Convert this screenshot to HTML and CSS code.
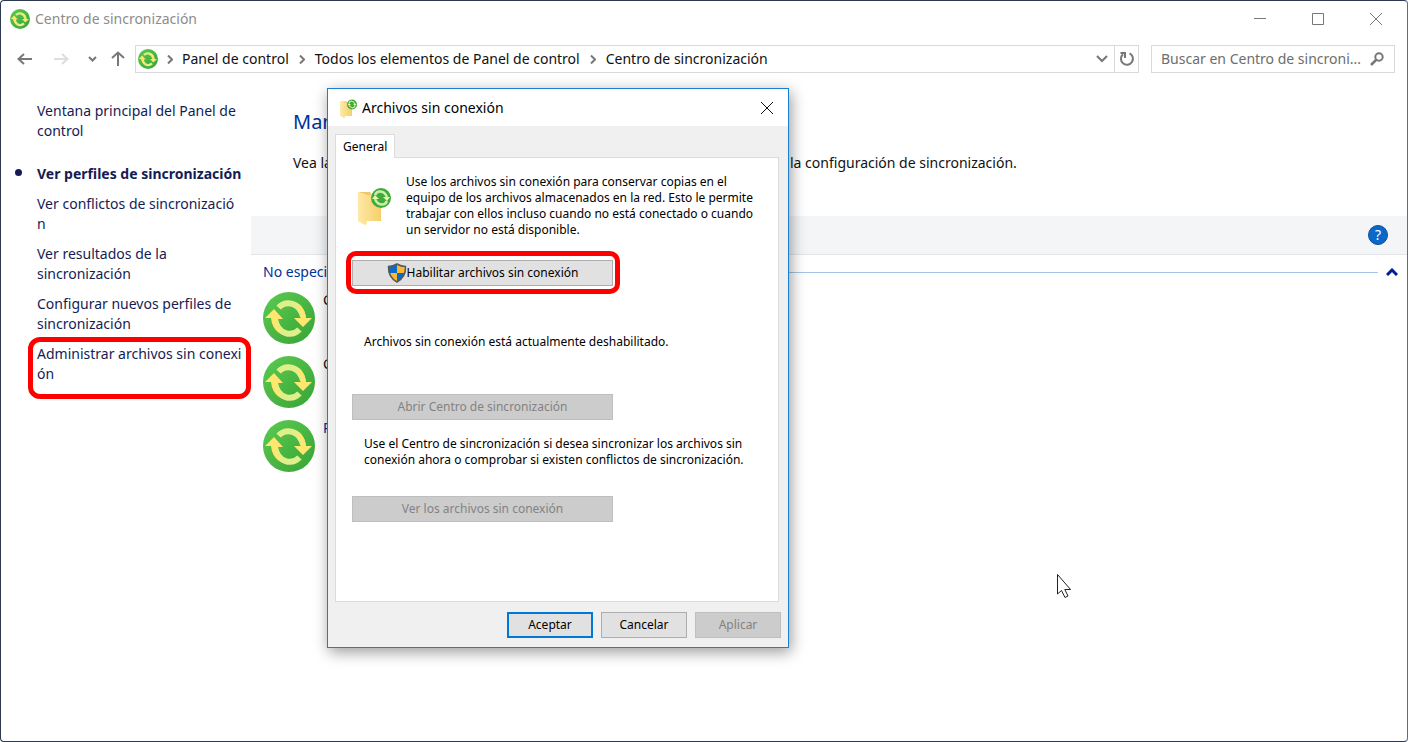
FILE: index.html
```html
<!DOCTYPE html>
<html lang="es">
<head>
<meta charset="utf-8">
<title>Centro de sincronización</title>
<link rel="stylesheet" href="styles.css">
</head>
<body>
<svg class="defs" aria-hidden="true">
  <defs>
    <linearGradient id="green" x1="0" y1="0" x2="1" y2="1">
      <stop offset="0" stop-color="#5ccb50"/><stop offset="1" stop-color="#37a336"/>
    </linearGradient>
    <linearGradient id="fold" x1="0" y1="0" x2="1" y2="0">
      <stop offset="0" stop-color="#ffe9a8"/><stop offset="1" stop-color="#f5cf6a"/>
    </linearGradient>
    <symbol id="sync" viewBox="0 0 52 52">
      <circle cx="26" cy="26" r="26" fill="url(#green)"/>
      <path d="M15.500 15.500C23 8 37 10 40 25" fill="none" stroke="#dff08a" stroke-width="6"/>
      <path d="M36.500 37.500C29 45 15 43 12 27" fill="none" stroke="#dff08a" stroke-width="6"/>
      <path d="M34 14Q38 19 38 26H31L40 35L49 26H43Q42 17 36 12z" fill="#ffe66e"/>
      <path d="M18 39Q14 34 14 27H20L11 17L2 26H8Q9 36 16 41z" fill="#ffe66e"/>
    </symbol>
    <symbol id="folder" viewBox="0 0 36 40">
      <path d="M2 7H14L16 10H25V36H2z" fill="#efc965"/>
      <path d="M2 7L11 10V40L2 36z" fill="#fff0bd"/>
      <path d="M2 7L11 10L25 9V36H11L9 40L2 36z" fill="url(#fold)"/>
      <circle cx="25" cy="13" r="10" fill="#3fab3b"/>
      <path d="M19 10C21 5 28 5 31 12M31 16C29 21 22 21 19 14" fill="none" stroke="#c9efa4" stroke-width="2.500"/>
      <path d="M27 12H34L31 16zM23 14H16L19 10z" fill="#e9f7a8"/>
    </symbol>
  </defs>
</svg>
<div class="window">
  <header class="titlebar">
    <svg class="icon20"><use href="#sync"/></svg>
    <span class="caption">Centro de sincronización</span>
    <button class="wbtn" aria-label="Minimizar"><svg width="12" height="12"><path d="M0 5.500H12"/></svg></button>
    <button class="wbtn" aria-label="Maximizar"><svg width="12" height="12"><path d="M.5.5H11.500V11.500H.5z"/></svg></button>
    <button class="wbtn" aria-label="Cerrar"><svg width="12" height="12"><path d="M0 0L12 12M12 0L0 12"/></svg></button>
  </header>
  <nav class="toolbar" aria-label="Navegación">
    <div class="history">
      <button aria-label="Atrás"><svg width="16" height="12"><path d="M7 1L1.500 6L7 11M2 6H15" stroke-width="2"/></svg></button>
      <button class="off" aria-label="Adelante"><svg width="16" height="12"><path d="M9 1L14.500 6L9 11M14 6H1" stroke-width="2"/></svg></button>
      <button aria-label="Recientes"><svg width="9" height="6"><path d="M1 1L4.500 4.500L8 1" stroke-width="2"/></svg></button>
      <button aria-label="Subir"><svg width="14" height="16"><path d="M1 7L7 1.500L13 7M7 2V15" stroke-width="2"/></svg></button>
    </div>
    <div class="address">
      <svg class="icon20"><use href="#sync"/></svg>
      <svg class="sep" width="6" height="9"><path d="M1 .5L5 4.500L1 8.500"/></svg>
      <a href="#">Panel de control</a>
      <svg class="sep" width="6" height="9"><path d="M1 .5L5 4.500L1 8.500"/></svg>
      <a href="#">Todos los elementos de Panel de control</a>
      <svg class="sep" width="6" height="9"><path d="M1 .5L5 4.500L1 8.500"/></svg>
      <a href="#">Centro de sincronización</a>
      <button class="drop" aria-label="Ubicaciones anteriores"><svg width="12" height="8"><path d="M1 1L6 6L11 1" stroke-width="2"/></svg></button>
      <button class="reload" aria-label="Actualizar"><svg width="16" height="16"><path d="M10.500 2.300A6 6 0 1 1 4 3.200M1.500 2H6V7" stroke-width="2"/></svg></button>
    </div>
    <div class="search">
      <input type="text" aria-label="Buscar" placeholder="Buscar en Centro de sincroni...">
      <svg width="14" height="14"><circle cx="9" cy="5" r="3.700" stroke-width="2"/><path d="M6.500 7.500L1 13" stroke-width="2.500"/></svg>
    </div>
  </nav>
  <div class="body">
    <aside class="side">
      <a class="home" href="#">Ventana principal del Panel de<br>control</a>
      <a class="current" href="#">Ver perfiles de sincronización</a>
      <a href="#">Ver conflictos de sincronizació<br>n</a>
      <a href="#">Ver resultados de la<br>sincronización</a>
      <a href="#">Configurar nuevos perfiles de<br>sincronización</a>
      <a class="marked" href="#">Administrar archivos sin conexi<br>ón</a>
    </aside>
    <main class="main">
      <h1>Man</h1>
      <p class="intro"><span>Vea la</span><span>la configuración de sincronización.</span></p>
      <div class="band"><button class="help" aria-label="Ayuda">?</button></div>
      <div class="group"><h2>No especi</h2><span class="rule"></span>
        <svg width="12" height="8"><path d="M1 7L6 2L11 7"/></svg></div>
      <ul class="items">
        <li><svg class="icon52"><use href="#sync"/></svg><span>C</span></li>
        <li><svg class="icon52"><use href="#sync"/></svg><span>C</span></li>
        <li><svg class="icon52"><use href="#sync"/></svg><span class="strong">P</span></li>
      </ul>
    </main>
  </div>
</div>

<section class="dialog" role="dialog" aria-labelledby="dlg-title">
  <header class="dlg-head">
    <svg class="mini"><use href="#folder"/></svg>
    <h2 id="dlg-title">Archivos sin conexión</h2>
    <button aria-label="Cerrar"><svg width="12" height="12"><path d="M0 0L12 12M12 0L0 12"/></svg></button>
  </header>
  <div class="dlg-body">
    <button class="tab" role="tab" aria-selected="true">General</button>
    <div class="panel" role="tabpanel">
      <div class="about">
        <svg class="big"><use href="#folder"/></svg>
        <p>Use los archivos sin conexión para conservar copias en el<br>equipo de los archivos almacenados en la red. Esto le permite<br>trabajar con ellos incluso cuando no está conectado o cuando<br>un servidor no está disponible.</p>
      </div>
      <button class="btn wide marked">
        <svg width="20" height="20" viewBox="0 0 20 20"><path d="M10 1Q14 3.500 18.500 3.500Q19 14 10 19Q1 14 1.500 3.500Q6 3.500 10 1z" fill="#0c6ac9"/><path d="M10 1Q14 3.500 18.500 3.500Q18.700 7 17.700 10H10zM10 10V19Q4.500 16 2.300 10z" fill="#fdb92e"/><path d="M10 1Q14 3.500 18.500 3.500Q19 14 10 19Q1 14 1.500 3.500Q6 3.500 10 1z" fill="none" stroke="#55585c" stroke-width="1.500"/></svg>Habilitar archivos sin conexión</button>
      <p class="status">Archivos sin conexión está actualmente deshabilitado.</p>
      <button class="btn wide" disabled>Abrir Centro de sincronización</button>
      <p class="hint">Use el Centro de sincronización si desea sincronizar los archivos sin<br>conexión ahora o comprobar si existen conflictos de sincronización.</p>
      <button class="btn wide" disabled>Ver los archivos sin conexión</button>
    </div>
    <footer class="actions">
      <button class="btn primary">Aceptar</button>
      <button class="btn">Cancelar</button>
      <button class="btn" disabled>Aplicar</button>
    </footer>
  </div>
</section>
<svg class="pointer" width="16" height="26" viewBox="0 0 16 26"><path d="M1.500 1.500V21L5.500 17.500L9 24.500L12 23L8.800 16.500H14.500z"/></svg>
</body>
</html>
```
FILE: styles.css
```css
* { box-sizing: border-box; }
body {
  margin: 0;
  font: 14px/20px "Noto Sans", "Open Sans", sans-serif;
  color: #111;
  background: #fff;
}
h1, h2, p, ul { margin: 0; padding: 0; font-weight: 400; }
a { color: inherit; text-decoration: none; }
button { font: inherit; border: 0; background: none; padding: 0; color: inherit; }
svg { flex: none; fill: none; }
.defs { position: absolute; width: 0; height: 0; }
.icon20 { width: 20px; height: 20px; }
.icon52 { width: 52px; height: 52px; }

.window {
  min-height: 100vh;
  border: 1px solid #2e3950;
  border-right-color: #4c7390;
  border-radius: 4px;
}
.titlebar { display: flex; align-items: center; height: 36px; padding: 0 2px 0 9px; }
.caption { flex: 1; margin-left: 5px; color: #8c8c8c; }
.wbtn { width: 58px; height: 30px; display: grid; place-items: center; }
.wbtn svg { stroke: #777; }

.toolbar { display: flex; align-items: center; height: 44px; padding-right: 12px; }
.history { display: flex; align-items: center; width: 125px; margin-right: 9px; padding-left: 16px; }
.history button { display: flex; }
.history button + button { margin-left: 20px; }
.history .off + button { margin-left: 19px; }
.history button:last-child { margin-left: 14px; }
.history svg { stroke: #777; }
.history .off svg { stroke: #ddd; }
.address { flex: 1; display: flex; align-items: center; height: 28px; border: 1px solid #d9d9d9; padding-left: 2px; }
.address a { white-space: nowrap; }
.sep { margin: 0 10px; stroke: #777; stroke-width: 2; }
.icon20 + .sep { margin: 0 9px; }
.drop { margin-left: auto; width: 24px; height: 26px; display: grid; place-items: center; }
.reload { width: 24px; height: 26px; border-left: 1px solid #d9d9d9; display: grid; place-items: center; }
.drop svg, .reload svg, .search svg { stroke: #777; }
.search { display: flex; align-items: center; width: 244px; height: 28px; margin-left: 12px; border: 1px solid #d9d9d9; padding: 0 10px 0 9px; }
.search input { flex: 1; min-width: 0; border: 0; padding: 0; font: inherit; outline: 0; background: none; }
.search input::placeholder { color: #6d6d6d; opacity: 1; }

.body { display: flex; padding-top: 20px; }
.side { display: flex; flex-direction: column; gap: 10px; width: 250px; padding-left: 36px; color: #151c55; white-space: nowrap; }
.home { margin-bottom: 13px; }
.current { position: relative; font-weight: 700; }
.current::before { content: ""; position: absolute; left: -22px; top: 5px; width: 7px; height: 7px; border-radius: 50%; background: #151c55; }
.marked { position: relative; }
.marked::after { content: ""; position: absolute; border: 5px solid #f00; border-radius: 10px; }
.side .marked::after { inset: -7px 0 -15px -9px; border-radius: 12px; }

.main { flex: 1; padding-top: 9px; }
h1 { padding-left: 42px; font-size: 20px; line-height: 24px; color: #003399; }
.intro { display: grid; grid-template-columns: 497px 1fr; padding: 19px 0 0 42px; }
.band { display: flex; align-items: center; justify-content: flex-end; height: 39px; margin-top: 43px; padding-right: 19px; background: #f4f5f7; border-bottom: 1px solid #e2e6ea; }
.help { width: 20px; height: 20px; border: 1px solid #0a4f9c; border-radius: 50%; background: #0a68c8; color: #fff; font-size: 14px; line-height: 18px; }
.group { display: flex; align-items: center; padding: 7px 9px 0 12px; }
.group h2 { font-size: 14px; line-height: 20px; color: #003399; }
.rule { flex: 1; height: 1px; margin: 0 8px 0 12px; background: #a6c4e4; }
.group svg { stroke: #00209a; stroke-width: 3; }
.items { list-style: none; padding: 10px 0 0 12px; display: grid; gap: 12px; }
.items li { display: flex; gap: 8px; line-height: 16px; }
.strong { color: #003399; }

.dialog {
  position: absolute;
  left: 327px;
  top: 88px;
  width: 462px;
  border: 1px solid #1a7fd0;
  background: #f0f0f0;
  box-shadow: 2px 4px 14px rgba(0, 0, 0, .4);
  font: 12px/16px "Noto Sans", "Open Sans", sans-serif;
  color: #000;
}
.dlg-head { display: flex; align-items: center; height: 37px; padding: 0 15px 0 11px; background: #fff; }
.mini { width: 19px; height: 20px; }
.dlg-head h2 { flex: 1; margin-left: 4px; font-size: 14px; line-height: 20px; }
.dlg-head button { display: flex; }
.dlg-head button svg { stroke: #111; }
.dlg-body { padding: 8px 9px 9px 7px; }
.tab { position: relative; z-index: 1; display: block; height: 24px; padding: 0 7px; border: 1px solid #dcdcdc; border-bottom: 0; background: #fff; }
.panel { min-height: 445px; margin-top: -1px; padding: 16px; border: 1px solid #dcdcdc; background: #fff; }
.about { display: flex; align-items: flex-start; padding-left: 4px; white-space: nowrap; }
.big { width: 36px; height: 40px; margin: 11px 14px 0 0; }
.btn { display: flex; align-items: center; justify-content: center; width: 86px; height: 26px; border: 1px solid #adadad; background: #e1e1e1; }
.btn:disabled { color: #838383; background: #ccc; border-color: #bfbfbf; }
.wide { width: 261px; }
.wide.marked { margin-top: 22px; }
.wide.marked::after { inset: -10px -8px -9px -7px; }
.status { padding: 48px 0 44px 12px; }
.hint { padding: 16px 0 28px 12px; white-space: nowrap; }
.actions { display: flex; justify-content: flex-end; gap: 8px; margin-top: 10px; margin-right: -2px; }
.primary { border: 2px solid #0078d7; }

.pointer { position: absolute; left: 1056px; top: 573px; fill: #fff; stroke: #222; }
```
